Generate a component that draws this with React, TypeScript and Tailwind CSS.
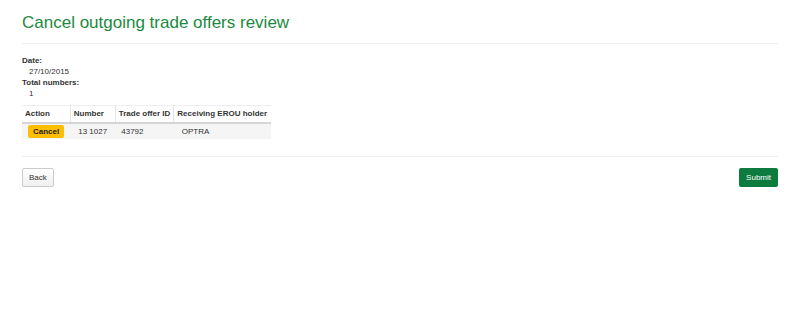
import React from 'react';

const rows = [{ number: '13 1027', offerId: '43792', holder: 'OPTRA' }];

export default function App() {
  return (
    <div className="min-h-[316px] bg-white px-[22px] pt-[12px] font-['Liberation_Sans',Arial,sans-serif] text-[8px] text-[#333]">
      {/* Title */}
      <h1 className="text-[17px] leading-[22px] font-normal text-[#1b8a3e]">Cancel outgoing trade offers review</h1>
      <hr className="mt-[9px] border-t border-[#eeeeee]" />

      {/* Summary */}
      <dl className="mt-[11px] leading-[11px]">
        <dt className="font-bold">Date:</dt>
        <dd className="pl-[7px]">27/10/2015</dd>
        <dt className="font-bold">Total numbers:</dt>
        <dd className="pl-[7px]">1</dd>
      </dl>

      {/* Table */}
      <table className="mt-[6px] table-fixed border-collapse whitespace-nowrap leading-[10px]">
        <thead>
          <tr className="border-t border-b-2 border-t-[#eeeeee] border-b-[#d5d5d5]">
            <th className="w-[48px] border-r border-[#e5e5e5] px-[3px] py-[3px] text-left font-bold">Action</th>
            <th className="w-[45px] border-r border-[#e5e5e5] px-[3px] py-[3px] text-left font-bold">Number</th>
            <th className="w-[58px] border-r border-[#e5e5e5] px-[3px] py-[3px] text-left font-bold">Trade offer ID</th>
            <th className="w-[97px] px-[3px] py-[3px] text-left font-bold">Receiving EROU holder</th>
          </tr>
        </thead>
        <tbody>
          {rows.map((r) => (
            <tr key={r.offerId} className="bg-[#f5f5f5]">
              <td className="px-[6px] py-[1px]">
                <span className="inline-block rounded-[2px] bg-[#ffbf00] px-[5px] py-[1px] leading-[11px] font-bold text-[#222]">Cancel</span>
              </td>
              <td className="px-[8px] py-[1px]">{r.number}</td>
              <td className="px-[6px] py-[1px]">{r.offerId}</td>
              <td className="px-[8px] py-[1px]">{r.holder}</td>
            </tr>
          ))}
        </tbody>
      </table>

      <hr className="mt-[17px] border-t border-[#eeeeee]" />

      {/* Actions */}
      <div className="mt-[11px] flex justify-between">
        <button className="h-[19px] rounded-[2px] border border-[#cccccc] bg-gradient-to-b from-white to-[#f0f0f0] px-[6px] text-[8px] text-[#333]">Back</button>
        <button className="h-[19px] rounded-[2px] bg-[#0d7a3e] px-[7px] text-[8px] text-white">Submit</button>
      </div>
    </div>
  );
}
